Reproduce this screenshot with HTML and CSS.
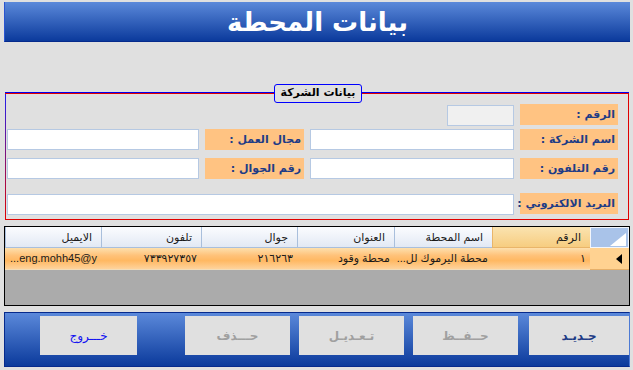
FILE: index.html
```html
<!DOCTYPE html>
<html lang="ar" dir="rtl">
  <head>
    <meta charset="utf-8">
    <link rel="stylesheet" href="styles.css">
  </head>
  <body>
    <header class="titlebar">
      <h1>بيانات المحطة</h1>
    </header>

    <section class="group">
      <div class="group-title">بيانات الشركة</div>
      <div class="form">
        <label class="lbl row-start">الرقم :</label>
        <input class="field field-id" type="text" readonly>

        <label class="lbl row-start">اسم الشركة :</label>
        <input class="field" type="text">
        <label class="lbl">مجال العمل :</label>
        <input class="field" type="text">

        <label class="lbl row-start">رقم التلفون :</label>
        <input class="field" type="text">
        <label class="lbl">رقم الجوال :</label>
        <input class="field" type="text">

        <label class="lbl row-start">البريد الالكتروني :</label>
        <input class="field field-wide" type="text">
      </div>
    </section>

    <div class="grid">
      <div class="grid-row grid-head">
        <div class="cell corner">
          <svg width="16" height="13" viewBox="0 0 16 13"><polygon points="16,0 16,13 0,13" fill="#fff"/></svg>
        </div>
        <div class="cell head-sel">الرقم</div>
        <div class="cell">اسم المحطة</div>
        <div class="cell">العنوان</div>
        <div class="cell">جوال</div>
        <div class="cell">تلفون</div>
        <div class="cell">الايميل</div>
      </div>
      <div class="grid-row grid-data">
        <div class="cell row-head">
          <svg width="6" height="10" viewBox="0 0 6 10"><polygon points="6,0 6,10 0,5" fill="#000"/></svg>
        </div>
        <div class="cell">١</div>
        <div class="cell">محطة اليرموك لل...</div>
        <div class="cell">محطة وقود</div>
        <div class="cell">٢١٦٢٦٣</div>
        <div class="cell">٧٣٣٩٢٧٣٥٧</div>
        <div class="cell">eng.mohh45@y...</div>
      </div>
    </div>

    <div class="actions">
      <button class="btn btn-new">جـديـد</button>
      <button class="btn btn-off">حــفــظ</button>
      <button class="btn btn-off">تـعـديـل</button>
      <button class="btn btn-off">حـــذف</button>
      <button class="btn btn-exit">خـــروج</button>
    </div>
  </body>
</html>
```

FILE: styles.css
```css
* {
  box-sizing: border-box;
}

body {
  margin: 0;
  padding: 2px 3px 0 4px;
  width: 633px;
  height: 370px;
  overflow: hidden;
  background: #e0e0e0;
  font-family: "DejaVu Sans", sans-serif;
}

/* blue header strip */
.titlebar {
  height: 40px;
  background: linear-gradient(#5b89da, #0b3a9c);
  border-left: 1px solid #2a55d0;
  border-bottom: 1px solid #062a8c;
  display: flex;
  justify-content: center;
  align-items: center;
}

.titlebar h1 {
  margin: 0;
  color: #fff;
  font-size: 26px;
  font-weight: bold;
  line-height: 40px;
}

/* company data box */
.group {
  position: relative;
  margin: 51px 1px 0 1px;
  height: 127px;
  border: 1px solid #e00000;
  border-left: none;
  padding-left: 1px;
  background: linear-gradient(#2020f0, #e00000) left top / 1px 100% no-repeat;
  box-shadow: 0 -1px 0 #0000f0;
}

.group-title {
  position: absolute;
  top: -10px;
  left: 269px;
  width: 88px;
  height: 19px;
  border: 1px solid #0000ff;
  border-radius: 3px;
  background: #e0e0e0;
  font-size: 11px;
  font-weight: bold;
  color: #000;
  text-align: center;
  line-height: 16px;
}

.form {
  display: grid;
  grid-template-columns: 98px 204px 99px 192px;
  grid-template-rows: 25px 29px 35px 21px;
  column-gap: 6px;
  align-items: start;
  padding: 10px 10px 0 1px;
}

.lbl {
  height: 21px;
  background: #ffc382;
  color: #1e3c86;
  font-size: 11px;
  font-weight: bold;
  line-height: 21px;
  padding-right: 3px;
  white-space: nowrap;
}

.row-start {
  grid-column: 1;
}

.field {
  height: 21px;
  border: 1px solid #b6c9e3;
  background: #fff;
  margin: 0;
  padding: 0 3px;
  font-family: inherit;
  outline: none;
}

.field-id {
  width: 67px;
  margin-top: 1px;
  background: #f0f0f0;
}

.field-wide {
  grid-column: 2 / 5;
  margin-top: 1px;
}

/* data grid */
.grid {
  margin-top: 6px;
  height: 80px;
  border: 1px solid #000;
  background: #ababab;
}

.grid-row {
  display: grid;
  grid-template-columns: 39px 98px 98px 97px 96px 100px 96px;
  font-family: "Liberation Sans", "DejaVu Sans", sans-serif;
  font-size: 11px;
  color: #1a1a1a;
}

.cell {
  white-space: nowrap;
  overflow: hidden;
}

.grid-head {
  height: 21px;
}

.grid-head .cell {
  line-height: 20px;
  padding-right: 9px;
  background: linear-gradient(#fbfcfe, #e2e9f4);
  border-left: 1px solid #a9bfdc;
  border-bottom: 1px solid #a9bfdc;
}

.grid-head .corner {
  padding: 5px 2px 0 0;
  background: #a9c3e9;
  border: 1px solid #f3f6fb;
  line-height: 0;
  direction: ltr;
}

.grid-head .corner svg {
  float: right;
}

.grid-head .head-sel {
  background: linear-gradient(#fae3b0, #f7cd80);
  border-left-color: #e9b56a;
  border-bottom-color: #e9b56a;
}

.grid-data {
  height: 22px;
}

.grid-data .cell {
  line-height: 21px;
  padding-right: 4px;
  background: linear-gradient(#fde0ae 0%, #ffc27a 35%, #ffb862 60%, #fed39c 100%);
  border-bottom: 1px solid #f2dcb8;
}

.grid-data .row-head {
  background: #ffd291;
  border-bottom: 1px solid #e6b06a;
  padding: 6px 7px 0 0;
  line-height: 0;
}

/* bottom button strip */
.actions {
  margin-top: 6px;
  height: 55px;
  display: flex;
  align-items: flex-start;
  padding: 3px 0 0 0;
  background: linear-gradient(#5b89da, #0b3a9c);
  border: 1px solid #062a8c;
  border-right-color: #4d7ad4;
}

.btn {
  height: 39px;
  width: 105px;
  border: none;
  margin: 0 0 0 9px;
  background: #e0e0e0;
  font-family: inherit;
  font-size: 12px;
  font-weight: bold;
  color: #a0a0a0;
  padding: 0;
}

.btn-new {
  width: 100px;
  margin-left: 11px;
  color: #1e3c86;
}

.btn-exit {
  width: 97px;
  margin-right: 39px;
  color: #1414f0;
  font-weight: normal;
}
```
